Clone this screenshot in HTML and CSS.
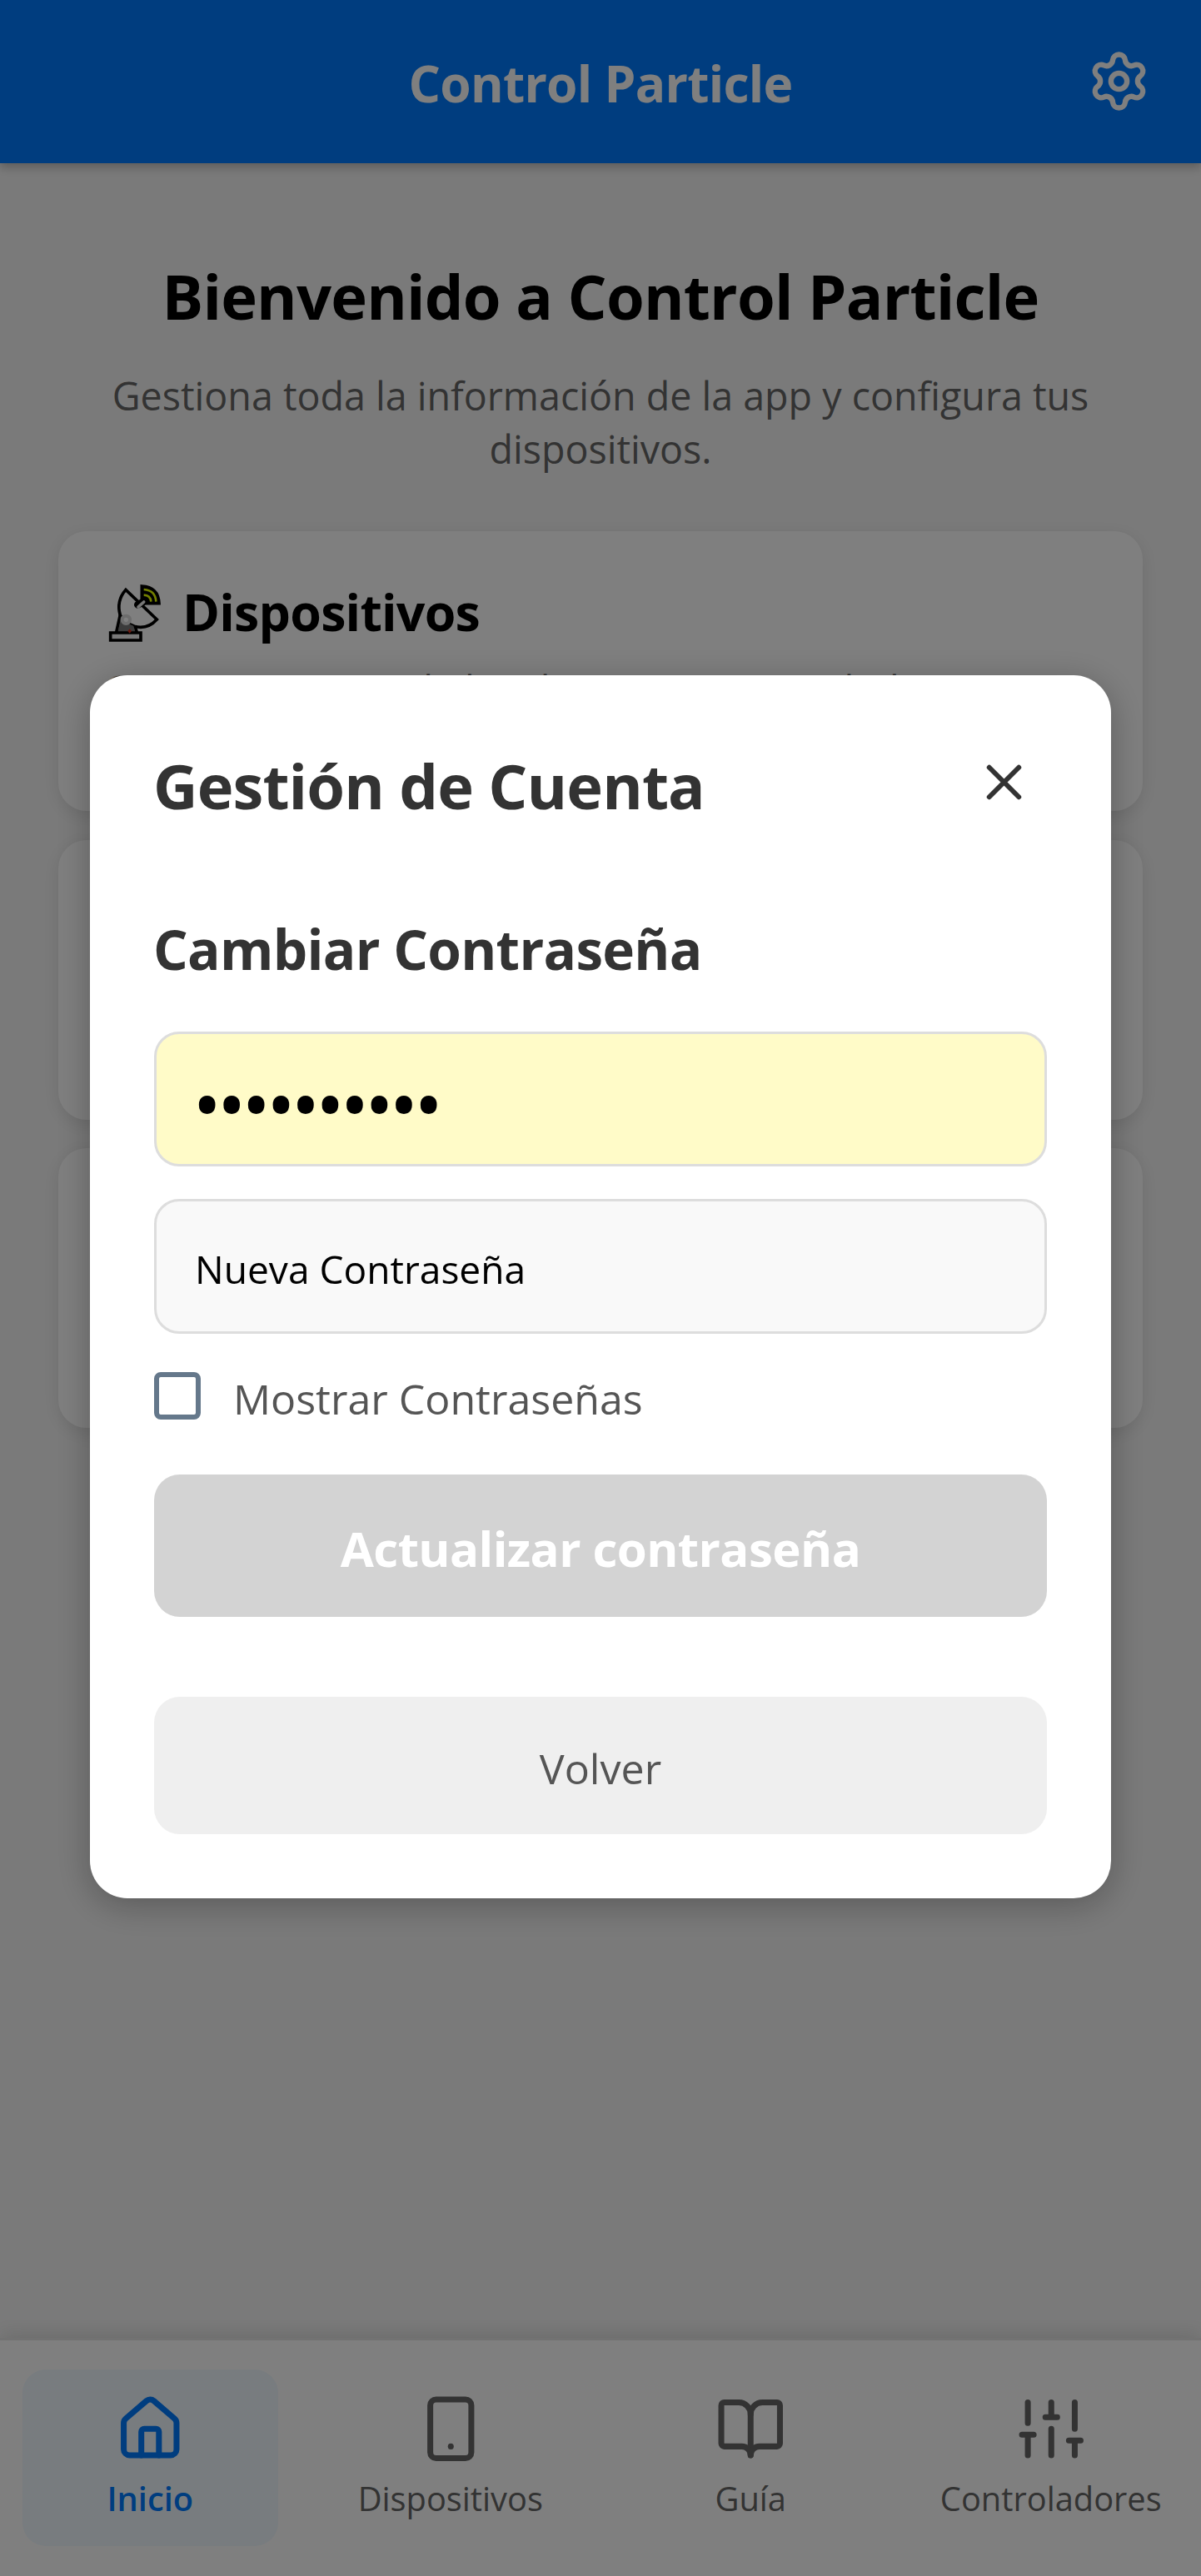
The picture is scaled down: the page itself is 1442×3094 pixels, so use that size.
FILE: index.html
```html
<!DOCTYPE html>
<html lang="es">
<head>
<meta charset="utf-8">
<title>Control Particle</title>
<link rel="stylesheet" href="styles.css">
</head>
<body>
<div class="app">
  <header class="topbar">
    <h1 class="topbar-title">Control Particle</h1>
    <svg class="topbar-gear icon" viewBox="0 0 24 24"><path d="M9.671 4.136a2.34 2.34 0 0 1 4.659 0 2.34 2.34 0 0 0 3.319 1.915 2.34 2.34 0 0 1 2.33 4.033 2.34 2.34 0 0 0 0 3.831 2.34 2.34 0 0 1-2.33 4.033 2.34 2.34 0 0 0-3.319 1.915 2.34 2.34 0 0 1-4.659 0 2.34 2.34 0 0 0-3.32-1.915 2.34 2.34 0 0 1-2.33-4.033 2.34 2.34 0 0 0 0-3.831A2.34 2.34 0 0 1 6.35 6.051a2.34 2.34 0 0 0 3.319-1.915"/><circle cx="12" cy="12" r="3"/></svg>
  </header>
  <main class="content">
    <h2 class="welcome">Bienvenido a Control Particle</h2>
    <p class="lead">Gestiona toda la información de la app y configura tus dispositivos.</p>
    <div class="cards">
      <section class="card">
        <div class="card-head">
          <svg class="card-icon" viewBox="15 15 240 240">
            <path d="M73 148L58 216H134L126 186Z" fill="#777" stroke="#000" stroke-width="11"/>
            <path d="M38 213H147V240H38Z" fill="#f2f2f2" stroke="#000" stroke-width="11"/>
            <path d="M73 150Q58 98 93 58L205 165Q172 202 124 190Q90 178 73 150Z" fill="#fff" stroke="#000" stroke-width="11"/>
            <path d="M77 154Q94 178 121 188L126 207H65Z" fill="#777"/>
            <path d="M151 94V45Q210 48 213 107H164Q162 96 151 94Z" fill="#000" stroke="#000" stroke-width="11"/>
            <path d="M158 57Q200 60 202 101M158 77Q182 78 184 101" fill="none" stroke="#e6ff00" stroke-width="8"/>
            <path d="M136 112L156 102" stroke="#000" stroke-width="26" stroke-linecap="round"/>
            <path d="M138 120L158 102" stroke="#eee" stroke-width="11" stroke-linecap="round"/>
            <circle cx="94" cy="166" r="14" fill="#fff" stroke="#dadada" stroke-width="12"/>
            <path d="M107 199L114 207L107 215L100 207Z" fill="#d0301c"/>
          </svg>
          <h3 class="card-title">Dispositivos</h3>
        </div>
        <p class="card-text">Gestiona y controla los dispositivos vinculados</p>
      </section>
      <section class="card"></section>
      <section class="card"></section>
    </div>
  </main>
  <nav class="tabbar">
    <a class="tab tab-active">
      <svg class="tab-icon icon" viewBox="0 0 24 24"><path d="M15 21v-8a1 1 0 0 0-1-1h-4a1 1 0 0 0-1 1v8"/><path d="M3 10a2 2 0 0 1 .709-1.528l7-5.999a2 2 0 0 1 2.582 0l7 5.999A2 2 0 0 1 21 10v9a2 2 0 0 1-2 2H5a2 2 0 0 1-2-2z"/></svg>
      <span>Inicio</span>
    </a>
    <a class="tab">
      <svg class="tab-icon icon" viewBox="0 0 24 24"><rect x="5" y="2" width="14" height="20" rx="2"/><path d="M12 18h.01"/></svg>
      <span>Dispositivos</span>
    </a>
    <a class="tab">
      <svg class="tab-icon icon" viewBox="0 0 24 24"><path d="M12 7v14"/><path d="M3 18a1 1 0 0 1-1-1V4a1 1 0 0 1 1-1h5a4 4 0 0 1 4 4 4 4 0 0 1 4-4h5a1 1 0 0 1 1 1v13a1 1 0 0 1-1 1h-6a3 3 0 0 0-3 3 3 3 0 0 0-3-3z"/></svg>
      <span>Guía</span>
    </a>
    <a class="tab">
      <svg class="tab-icon icon" viewBox="0 0 24 24"><path d="M4 21v-7M4 10V3M12 21v-9M12 8V3M20 21v-5M20 12V3M2 14h4M10 8h4M18 16h4"/></svg>
      <span>Controladores</span>
    </a>
  </nav>
</div>
<div class="overlay">
  <div class="modal">
    <div class="modal-head">
      <h2 class="modal-title">Gestión de Cuenta</h2>
      <svg class="modal-close icon" viewBox="0 0 24 24"><path d="M18 6L6 18M6 6l12 12"/></svg>
    </div>
    <h3 class="section-title">Cambiar Contraseña</h3>
    <div class="field field-filled"><span class="bullets">••••••••••</span></div>
    <div class="field">Nueva Contraseña</div>
    <div class="check-row">
      <span class="check-box"></span>
      <span class="check-label">Mostrar Contraseñas</span>
    </div>
    <div class="btn btn-primary">Actualizar contraseña</div>
    <div class="btn btn-back">Volver</div>
  </div>
</div>
</body>
</html>
```
FILE: styles.css
```css
* { box-sizing: border-box; margin: 0; padding: 0; }

body {
  font-family: "Open Sans", "Noto Sans", sans-serif;
  background: #f5f5f5;
  color: #000;
}

.icon {
  fill: none;
  stroke: currentColor;
  stroke-width: 2;
  stroke-linecap: round;
  stroke-linejoin: round;
  flex: none;
}

.app {
  height: 3094px;
  display: flex;
  flex-direction: column;
}

.topbar {
  height: 196px;
  flex: none;
  display: grid;
  grid-template-columns: 77px 1fr 77px;
  align-items: center;
  padding: 0 60px;
  background: #007bff;
  color: #fff;
  box-shadow: 0 5px 11px rgba(0, 0, 0, .25);
}
.topbar-title {
  grid-column: 2;
  padding-top: 3px;
  text-align: center;
  font-size: 60.4px;
  font-weight: 700;
  letter-spacing: -.7px;
}
.topbar-gear { width: 77px; height: 77px; margin-bottom: 2px; }

.content {
  flex: 1;
  padding: 110px 70px 0;
}
.welcome {
  font-size: 74px;
  line-height: 100px;
  letter-spacing: -.8px;
  text-align: center;
}
.lead {
  margin-top: 37px;
  font-size: 46.6px;
  line-height: 64px;
  text-align: center;
  color: #666;
}
.cards {
  margin-top: 67px;
  display: flex;
  flex-direction: column;
  gap: 34.5px;
}
.card {
  height: 336px;
  padding: 55px;
  border-radius: 34px;
  background: #fff;
  box-shadow: 0 5px 22px rgba(0, 0, 0, .1);
}
.card-head { display: flex; align-items: center; gap: 14px; height: 82px; }
.card-icon { width: 80px; height: 80px; }
.card-title { font-size: 60.8px; line-height: 82px; letter-spacing: -.75px; padding-top: 1px; }
.card-text {
  margin-top: 21px;
  font-size: 46.6px;
  line-height: 64px;
  color: #555;
}

.tabbar {
  height: 286px;
  flex: none;
  display: grid;
  grid-template-columns: repeat(4, 1fr);
  border-top: 3px solid #e4e4e4;
  background: #fff;
  box-shadow: 0 -5px 22px rgba(0, 0, 0, .12);
}
.tab {
  height: 212px;
  margin: 35px 27px 0;
  padding-top: 29px;
  display: flex;
  flex-direction: column;
  align-items: center;
  border-radius: 28px;
  font-size: 39.8px;
  line-height: 56px;
  color: #666;
  white-space: nowrap;
}
.tab-active {
  background: #f0f8ff;
  color: #007bff;
  font-weight: 600;
}
.tab-icon { width: 84.5px; height: 84.5px; margin-bottom: 13px; }

.overlay {
  position: fixed;
  inset: 0;
  display: flex;
  align-items: center;
  justify-content: center;
  padding-bottom: 3px;
  background: rgba(0, 0, 0, .5);
}
.modal {
  width: 1226px;
  padding: 77px;
  border-radius: 45px;
  background: #fff;
  color: #333;
  box-shadow: 0 8px 42px rgba(0, 0, 0, .28);
}
.modal-head {
  height: 112px;
  display: flex;
  align-items: center;
  justify-content: space-between;
  padding-right: 16px;
}
.modal-title { margin-left: -1px; font-size: 74px; line-height: 112px; letter-spacing: -.9px; }
.modal-close { width: 71px; height: 71px; margin-bottom: 9px; }
.section-title {
  margin: 96px 0 55px -1px;
  font-size: 65.6px;
  line-height: 88px;
  letter-spacing: -.7px;
}
.field {
  height: 162px;
  display: flex;
  align-items: center;
  padding: 6px 46px 0;
  border: 3px solid #ddd;
  border-radius: 30px;
  background: #f9f9f9;
  color: #000;
  font-size: 46.1px;
}
.field + .field { margin-top: 39px; }
.field-filled { padding: 9px 43px 0; background: #fffbc8; }
.bullets { font-size: 94px; letter-spacing: -5.8px; line-height: 1; }

.check-row {
  height: 57px;
  margin-top: 46px;
  display: flex;
  align-items: center;
  gap: 39px;
}
.check-box {
  width: 56px;
  height: 57px;
  border: 6px solid #65788b;
  border-radius: 8px;
}
.check-label { padding-top: 5px; font-size: 50.1px; color: #555; }

.btn {
  display: flex;
  align-items: center;
  justify-content: center;
  border-radius: 31px;
}
.btn-primary {
  height: 171px;
  margin-top: 66px;
  padding-top: 6px;
  background: #d3d3d3;
  color: #fff;
  font-size: 58.2px;
  font-weight: 700;
  letter-spacing: -.6px;
}
.btn-back {
  height: 165px;
  margin-top: 96px;
  padding-top: 5px;
  background: #efefef;
  color: #555;
  font-size: 50.1px;
}
```
